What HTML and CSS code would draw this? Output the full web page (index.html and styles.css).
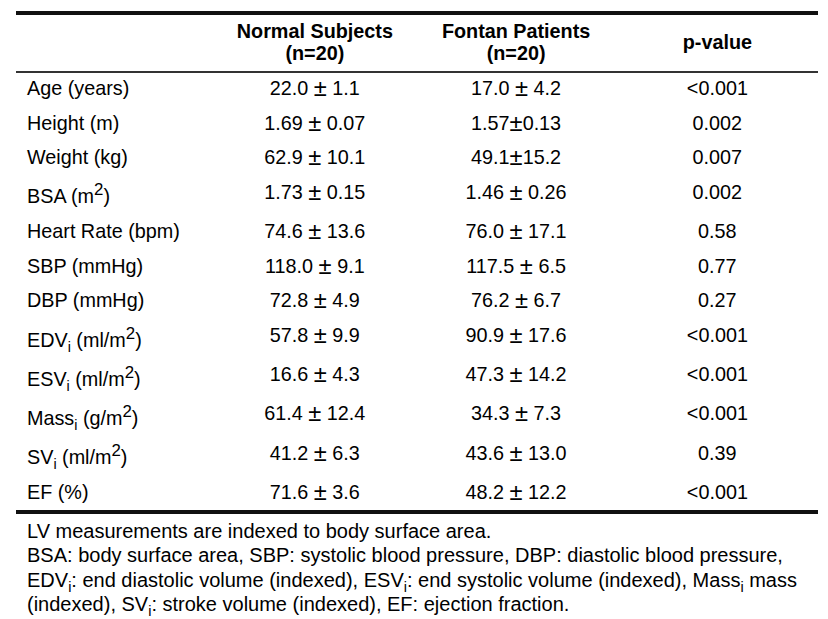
FILE: index.html
```html
<!DOCTYPE html>
<html>
<head>
<meta charset="utf-8">
<link rel="stylesheet" href="styles.css">
</head>
<body>
<div class="wrap">
<table class="data">
  <colgroup>
    <col class="c-label"><col class="c-val"><col class="c-val"><col class="c-val">
  </colgroup>
  <thead>
    <tr>
      <th></th>
      <th>Normal Subjects<br>(n=20)</th>
      <th>Fontan Patients<br>(n=20)</th>
      <th>p-value</th>
    </tr>
  </thead>
  <tbody>
    <tr><td class="label">Age (years)</td><td>22.0 <span class="pm">±</span> 1.1</td><td>17.0 <span class="pm">±</span> 4.2</td><td>&lt;0.001</td></tr>
    <tr><td class="label">Height (m)</td><td>1.69 <span class="pm">±</span> 0.07</td><td>1.57<span class="pm">±</span>0.13</td><td>0.002</td></tr>
    <tr><td class="label">Weight (kg)</td><td>62.9 <span class="pm">±</span> 10.1</td><td>49.1<span class="pm">±</span>15.2</td><td>0.007</td></tr>
    <tr class="tall"><td class="label">BSA (m<sup>2</sup>)</td><td>1.73 <span class="pm">±</span> 0.15</td><td>1.46 <span class="pm">±</span> 0.26</td><td>0.002</td></tr>
    <tr><td class="label">Heart Rate (bpm)</td><td>74.6 <span class="pm">±</span> 13.6</td><td>76.0 <span class="pm">±</span> 17.1</td><td>0.58</td></tr>
    <tr><td class="label">SBP (mmHg)</td><td>118.0 <span class="pm">±</span> 9.1</td><td>117.5 <span class="pm">±</span> 6.5</td><td>0.77</td></tr>
    <tr><td class="label">DBP (mmHg)</td><td>72.8 <span class="pm">±</span> 4.9</td><td>76.2 <span class="pm">±</span> 6.7</td><td>0.27</td></tr>
    <tr class="tall"><td class="label">EDV<sub>i</sub> (ml/m<sup>2</sup>)</td><td>57.8 <span class="pm">±</span> 9.9</td><td>90.9 <span class="pm">±</span> 17.6</td><td>&lt;0.001</td></tr>
    <tr class="tall"><td class="label">ESV<sub>i</sub> (ml/m<sup>2</sup>)</td><td>16.6 <span class="pm">±</span> 4.3</td><td>47.3 <span class="pm">±</span> 14.2</td><td>&lt;0.001</td></tr>
    <tr class="tall"><td class="label">Mass<sub>i</sub> (g/m<sup>2</sup>)</td><td>61.4 <span class="pm">±</span> 12.4</td><td>34.3 <span class="pm">±</span> 7.3</td><td>&lt;0.001</td></tr>
    <tr class="tall"><td class="label">SV<sub>i</sub> (ml/m<sup>2</sup>)</td><td>41.2 <span class="pm">±</span> 6.3</td><td>43.6 <span class="pm">±</span> 13.0</td><td>0.39</td></tr>
    <tr class="last"><td class="label">EF (%)</td><td>71.6 <span class="pm">±</span> 3.6</td><td>48.2 <span class="pm">±</span> 12.2</td><td>&lt;0.001</td></tr>
  </tbody>
  <tfoot>
    <tr>
      <td colspan="4" class="notes">
        LV measurements are indexed to body surface area.<br>
        BSA: body surface area, SBP: systolic blood pressure, DBP: diastolic blood pressure,<br>
        EDV<sub>i</sub>: end diastolic volume (indexed), ESV<sub>i</sub>: end systolic volume (indexed), Mass<sub>i</sub> mass<br>
        (indexed), SV<sub>i</sub>: stroke volume (indexed), EF: ejection fraction.
      </td>
    </tr>
  </tfoot>
</table>
</div>
</body>
</html>
```

FILE: styles.css
```css
html, body {
  margin: 0;
  padding: 0;
  background: #fff;
}
body {
  font-family: "Liberation Sans", Arial, sans-serif;
  color: #000;
  font-size: 19.8px;
}
.wrap {
  padding: 11px 10px 0 16px;
}
.data {
  width: 802px;
  border-collapse: collapse;
  table-layout: fixed;
}
.c-label { width: 198px; }
.c-val { width: 201px; }

.data thead tr {
  border-top: 4px solid #111;
  border-bottom: 2px solid #333;
}
.data th {
  font-weight: bold;
  line-height: 22px;
  padding: 5px 0 7px;
  vertical-align: middle;
  text-align: center;
}
.data td {
  line-height: 22px;
  padding: 4px 0 8.6px;
  vertical-align: top;
  text-align: center;
  white-space: nowrap;
}
.data td.label {
  text-align: left;
  padding-left: 11px;
}
.data tr.tall td.label {
  padding-top: 8.7px;
}
.data tr.last td {
  padding-bottom: 7px;
}
.data tr.last {
  border-bottom: 4px solid #111;
}
.pm {
  font-size: 1.2em;
  line-height: 0;
  vertical-align: -0.04em;
}
sup {
  font-size: 0.85em;
  line-height: 0;
  vertical-align: 0.45em;
}
sub {
  font-size: 0.72em;
  line-height: 0;
  vertical-align: -0.35em;
}
.data td.notes {
  text-align: left;
  white-space: normal;
  font-size: 20px;
  line-height: 24.4px;
  padding: 5px 0 0 11px;
}
```
